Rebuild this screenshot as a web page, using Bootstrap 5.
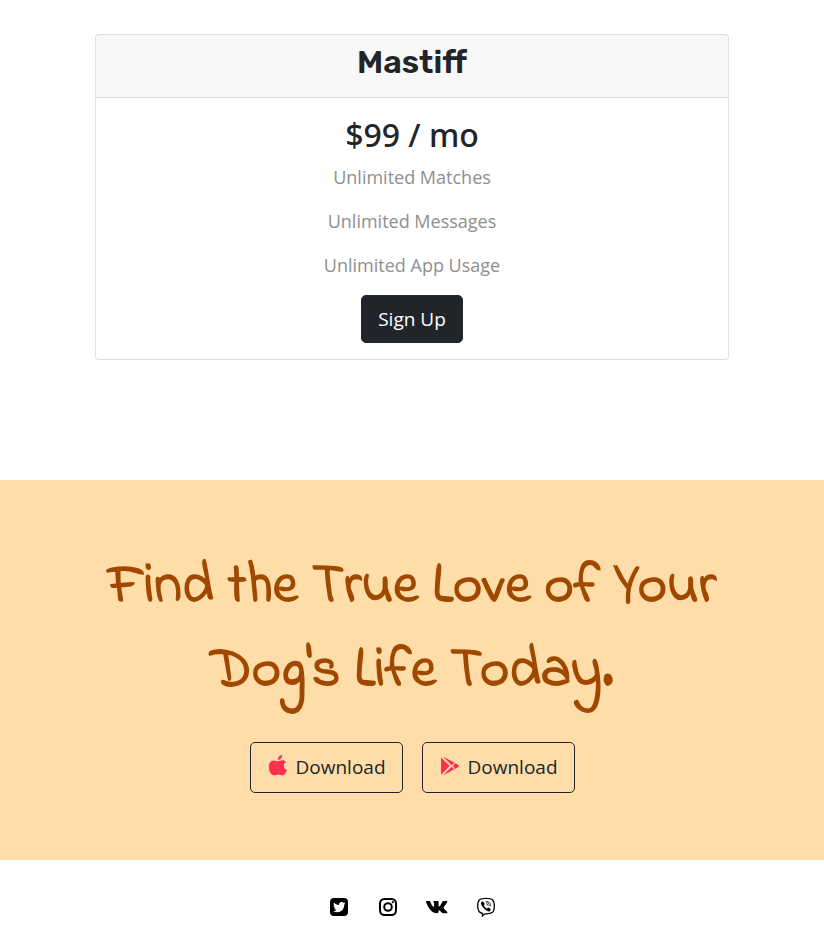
<!DOCTYPE html>
<html lang="en">
<head>
<meta charset="utf-8">
<meta name="viewport" content="width=device-width, initial-scale=1">
<title>Find the True Love of Your Dog's Life</title>
<link href="https://cdn.jsdelivr.net/npm/bootstrap@5.3.0/dist/css/bootstrap.min.css" rel="stylesheet">
<style>
body { font-family: "Open Sans", sans-serif; color: #212529; }
.plan-wrap { max-width: 634px; padding: 34px 0 120px; }
.plan-card { --bs-card-border-color: rgba(0, 0, 0, .125); --bs-card-border-radius: 4px; --bs-card-inner-border-radius: 3px; }
.plan-head { padding: 8px 16px; }
.plan-name { font-family: Rubik, Inter, sans-serif; font-weight: 600; font-size: 32px; line-height: 38px; }
.plan-price { font-family: "Noto Sans", sans-serif; font-size: 32px; line-height: 41px; font-weight: 500; }
.plan-line { font-size: 18px; line-height: 28px; color: #8f8f8f; }
.big-btn { font-size: 19px; line-height: 30px; }
.plan-btn { padding: 8px 16px; border-radius: 5px; }
.cta { background: #ffdda9; padding: 66px 72px 67px; }
.cta-title { font-family: "Indie Flower", Lato, sans-serif; font-weight: 700; font-size: 56px; line-height: 84px; color: #a04800; margin-bottom: 28px; }
.store-btn { padding: 9px 16px 10px 17px; border-radius: 5px; }
.store-row { gap: 19px; }
.store-icon { color: #ff2f4f; }
.social { padding: 35px 0 15px; gap: 25px; }
</style>
</head>
<body>
<section class="plan-wrap container-fluid">
  <div class="card plan-card text-center">
    <div class="card-header plan-head"><h3 class="plan-name mb-2">Mastiff</h3></div>
    <div class="card-body p-3">
      <h2 class="plan-price mb-2">$99 / mo</h2>
      <p class="plan-line mb-3">Unlimited Matches</p>
      <p class="plan-line mb-3">Unlimited Messages</p>
      <p class="plan-line mb-3">Unlimited App Usage</p>
      <button type="button" class="btn btn-dark big-btn plan-btn">Sign Up</button>
    </div>
  </div>
</section>
<section class="cta text-center">
  <h1 class="cta-title">Find the True Love of Your Dog's Life Today.</h1>
  <div class="store-row d-flex flex-wrap justify-content-center">
    <button type="button" class="btn btn-outline-dark big-btn store-btn d-flex align-items-center gap-2">
      <svg class="store-icon" width="20" height="24" viewBox="2 1 20 24" fill="currentColor" aria-hidden="true"><path d="M20 8c-1.600.9-2.300 2.200-2.200 3.900 0 1.900 1.100 3.300 3.100 4.200-.6 2.200-2 4.900-4 5.200-1.800.3-2.700-.8-4.600-.8s-3 1.100-4.700.8C4.800 21 2.800 16.600 2.800 12.800c0-3.800 2.100-6.400 5.200-6.400 1.700 0 2.900.9 4.100.9s2.500-1 4.500-1c1.400 0 2.600.6 3.400 1.700zM11.800 5.900c-.1-2.700 1.700-4.500 4.400-4.900.3 2.700-1.500 4.900-4.400 4.900z"/></svg>
      Download
    </button>
    <button type="button" class="btn btn-outline-dark big-btn store-btn d-flex align-items-center gap-2">
      <svg class="store-icon" width="20" height="24" viewBox="0 1 20 24" fill="currentColor" aria-hidden="true"><path d="M1 3.300l8.700 8.700L1 20.700zM3 2.500l11.500 6.200-3 2.500zM11.500 12.800l2.800 2.500L3 21.500zM15.500 9.100l4 2.900-4 2.900-3-2.900z"/></svg>
      Download
    </button>
  </div>
</section>
<footer class="social d-flex justify-content-center">
  <a href="#" class="text-black d-flex" aria-label="Twitter"><svg width="24" height="24" viewBox="0 0 24 24" fill="currentColor"><path fill-rule="evenodd" d="M7 3h10a4 4 0 0 1 4 4v10a4 4 0 0 1-4 4H7a4 4 0 0 1-4-4V7a4 4 0 0 1 4-4zm11.500 5.200-1.400.4.900-1.400-1.600.6a2.600 2.600 0 0 0-4.400 2.300C9.900 10 8.100 9 6.900 7.500c-.7 1.200-.3 2.600.8 3.400l-1.100-.3c0 1.300.9 2.300 2 2.500l-1.100.1c.3 1 1.200 1.700 2.300 1.700-1.100.9-2.400 1.200-3.700 1.100 5.200 3 11.100.2 11.100-6.200z"/></svg></a>
  <a href="#" class="text-black d-flex" aria-label="Instagram"><svg width="24" height="24" viewBox="0 0 24 24" fill="none" stroke="currentColor" stroke-width="2"><rect x="4" y="4" width="16" height="16" rx="4.500"/><circle cx="12" cy="12" r="3.800"/><circle cx="16.800" cy="7.200" r="1.100" fill="currentColor" stroke="none"/></svg></a>
  <a href="#" class="text-black d-flex" aria-label="VK"><svg width="24" height="24" viewBox="0 0 24 24" fill="currentColor"><path d="M1.200 6.100h3.200c.6 0 .8.300 1 .9 1 2.800 2.700 5 3.300 5 .3 0 .4-.2.400-.9V8.600c-.1-1.300-.8-1.400-.8-1.900 0-.3.200-.6.600-.6h4c.5 0 .7.300.7.900v4c0 .4.200.6.400.6.600 0 2.200-2.100 3.200-4.500.3-.7.500-1 1.100-1h3.200c.7 0 .9.400.7.900-.6 1.700-3.500 5.100-3.500 5.300-.2.400-.2.600.2 1.100 1.600 1.600 3 2.900 3.500 3.900.2.600-.1 1-.8 1h-3.200c-1.200 0-1.500-.9-3.200-2.400-1.100-1-1.700-.8-1.700.2 0 1.600-.1 2.200-1.300 2.200C7 18.300 3.300 13.300 1 7c-.2-.5-.1-.9.200-.9z"/></svg></a>
  <a href="#" class="text-black d-flex" aria-label="Viber"><svg width="24" height="24" viewBox="0 0 24 24" fill="none" stroke="currentColor" stroke-linecap="round"><path stroke-width="1.300" d="M8.500 18.500v2.300l2.500-2c6.800.3 9.300-1 9.300-7.600 0-6.200-1.800-7.800-8.300-7.800S3.700 5 3.700 11.200c0 4.500 1.200 6.400 4.800 7.300z"/><path fill="currentColor" stroke="none" d="M8.500 6.500c.6-.2 2.400 1.900 2.200 2.600-.1.500-.9.800-.8 1.200.4 1.500 1.700 2.700 3 3.100.5.100.8-.8 1.300-.8.700 0 2.700 1.500 2.600 2.100-.2.800-1.400 1.900-2.200 1.700-3.300-1-6.900-4.800-7.700-7.900-.1-.8.700-1.700 1.600-2z"/><path stroke-width=".7" d="M12.200 6.200c2.700 0 4.700 2 4.700 4.800M12.400 7.600c1.900.1 3 1.200 3 3.100M12.600 9c.9.100 1.300.6 1.300 1.400"/></svg></a>
</footer>
<script src="https://cdn.jsdelivr.net/npm/bootstrap@5.3.0/dist/js/bootstrap.bundle.min.js"></script>
</body>
</html>
